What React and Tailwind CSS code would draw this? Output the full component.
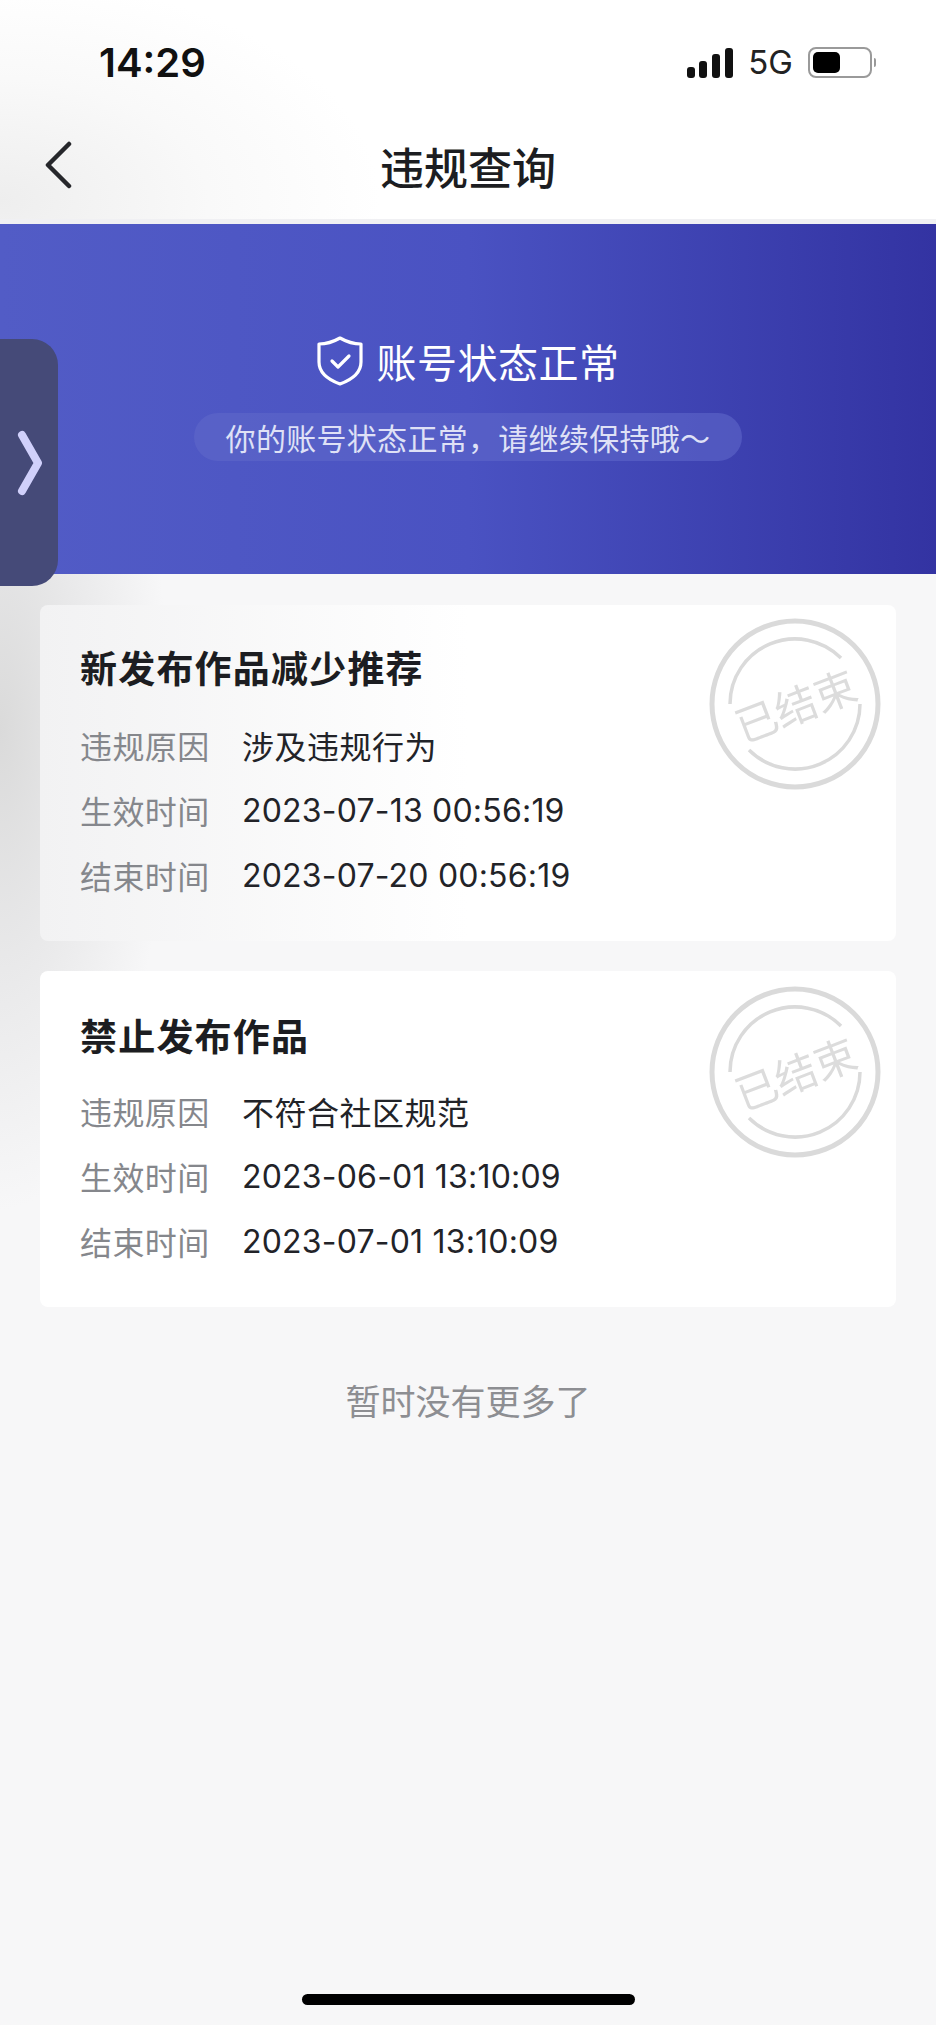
const cn = { fontFamily: '"Noto Sans CJK SC", "Noto Sans", sans-serif' };
const dateFont = { fontFamily: 'Inter, "Noto Sans CJK SC", sans-serif' };

function Stamp({ shaded }) {
  return (
    <div className={`absolute right-[13px] w-[176px] h-[176px] flex items-center justify-center blur-[0.6px] ${shaded ? 'top-[11px]' : 'top-[13px]'}`}>
      <svg viewBox="0 0 176 176" className="absolute inset-0 w-full h-full" fill="none" stroke="#dadada">
        <circle cx="88" cy="88" r="83" strokeWidth="5" />
        <path d="M 23 88 A 65 65 0 0 1 134 42" strokeWidth="3.5" />
        <path d="M 42 134 A 65 65 0 0 0 153 88" strokeWidth="3.5" />
      </svg>
      <span className="rotate-[-21deg] text-[42px] leading-none text-[#dcdcdc]" style={cn}>已结束</span>
    </div>
  );
}

function Row({ label, value, isDate }) {
  return (
    <div className="flex items-center h-[65px]">
      <span className="w-[162px] text-[32px] tracking-[0.4px] text-[#85878c] shrink-0" style={cn}>{label}</span>
      <span className={`text-[32px] text-[#222328] ${isDate ? 'tracking-[0.2px] pt-[2px]' : 'tracking-[0.5px]'}`} style={isDate ? dateFont : cn}>{value}</span>
    </div>
  );
}

function Card({ title, rows, shaded }) {
  return (
    <div className={`relative h-[336px] rounded-[8px] pl-[40px] ${shaded ? 'pt-[36px] bg-gradient-to-r from-[#f2f2f3] via-white to-white' : 'pt-[38px] bg-white'}`}>
      <h2 className={`text-[37px] leading-[52px] font-bold text-[#1c1d21] tracking-[1.2px] ${shaded ? 'mb-[19px]' : 'mb-[17px]'}`} style={cn}>{title}</h2>
      {rows.map((r, i) => <Row key={r[0]} label={r[0]} value={r[1]} isDate={i > 0} />)}
      <Stamp shaded={shaded} />
    </div>
  );
}

export default function App() {
  return (
    <div className="relative w-[936px] h-[2025px] overflow-hidden flex flex-col bg-[#f7f7f8] bg-[radial-gradient(ellipse_170px_480px_at_0px_730px,#dadada_0%,#e9e9ea_50%,#f7f7f8_100%)]">
      {/* status bar + nav */}
      <div className="h-[224px] shrink-0 border-b-[5px] border-[#f0f0f3] bg-[radial-gradient(ellipse_380px_220px_at_0px_200px,#eeeeee_0%,#f9f9f9_55%,#ffffff_100%)]">
        <div className="flex items-center justify-between h-[124px] pt-[1px] pl-[99px] pr-[60px]">
          <span className="text-[40px] font-semibold text-[#111]" style={{ fontFamily: 'Inter, sans-serif' }}>14:29</span>
          <div className="flex items-center">
            <svg width="46" height="30" viewBox="0 0 46 30" fill="#111">
              <rect x="0" y="19" width="8" height="11" rx="3" />
              <rect x="12" y="13" width="8" height="17" rx="3" />
              <rect x="25" y="6" width="8" height="24" rx="3" />
              <rect x="38" y="0" width="8" height="30" rx="3" />
            </svg>
            <span className="ml-[15px] text-[33px] leading-none text-[#222]" style={{ fontFamily: 'Inter, sans-serif' }}>5G</span>
            <div className="ml-[15px] flex items-center">
              <div className="w-[64px] h-[31px] rounded-[8px] border-2 border-[#9a9a9a] p-[3px]">
                <div className="w-[27px] h-full rounded-[5px] bg-black" />
              </div>
              <div className="ml-[2px] w-[2px] h-[9px] rounded-r-full bg-[#999]" />
            </div>
          </div>
        </div>
        <div className="relative flex items-center justify-center h-[86px] pb-[2px]">
          <svg className="absolute left-[44px] top-[17px]" width="28" height="48" viewBox="0 0 28 48" fill="none" stroke="#26272b" strokeWidth="4.5" strokeLinecap="round" strokeLinejoin="round">
            <path d="M25 3 L4 24 L25 45" />
          </svg>
          <h1 className="text-[44px] font-medium text-[#1c1d21]" style={cn}>违规查询</h1>
        </div>
      </div>

      {/* banner */}
      <div className="h-[350px] shrink-0 flex flex-col items-center bg-gradient-to-r from-[#525cc6] via-[#4a52c2] via-50% to-[#3333a2] pt-[112px]">
        <div className="flex items-center">
          <svg width="46" height="50" viewBox="0 0 46 50" fill="none" stroke="#fff" strokeWidth="3.2" strokeLinejoin="round" strokeLinecap="round">
            <path d="M23 2 C30 6 36 8 44 8 V26 C44 37 34 44 23 48 C12 44 2 37 2 26 V8 C10 8 16 6 23 2 Z" />
            <path d="M15 25 L21 31 L32 20" />
          </svg>
          <span className="ml-[14px] text-[40px] tracking-[0.5px] leading-[50px] text-white" style={cn}>账号状态正常</span>
        </div>
        <div className="mt-[27px] h-[48px] w-[548px] rounded-full bg-[#5f68c9]/60 flex items-center justify-center text-[30px] tracking-[0.3px] leading-none text-[#dfe1f6]" style={cn}>
          你的账号状态正常，请继续保持哦～
        </div>
      </div>

      {/* side tab */}
      <div className="absolute left-0 top-[339px] w-[58px] h-[247px] rounded-r-[26px] bg-[#454a78] flex items-center pl-[16px]">
        <svg width="28" height="66" viewBox="0 0 28 66" fill="none" stroke="#d0d0fb" strokeWidth="8" strokeLinecap="round" strokeLinejoin="round">
          <path d="M6 5 L22 33 L6 61" />
        </svg>
      </div>

      <div className="flex flex-col gap-[30px] px-[40px] pt-[31px]">
        <Card
          shaded
          title="新发布作品减少推荐"
          rows={[
            ['违规原因', '涉及违规行为'],
            ['生效时间', '2023-07-13 00:56:19'],
            ['结束时间', '2023-07-20 00:56:19'],
          ]}
        />
        <Card
          title="禁止发布作品"
          rows={[
            ['违规原因', '不符合社区规范'],
            ['生效时间', '2023-06-01 13:10:09'],
            ['结束时间', '2023-07-01 13:10:09'],
          ]}
        />
      </div>

      <p className="mt-[68px] text-center text-[35px] leading-[50px] text-[#8d8e92]" style={cn}>暂时没有更多了</p>

      <div className="mt-auto mb-[20px] mx-auto w-[333px] h-[11px] rounded-full bg-black" />
    </div>
  );
}
